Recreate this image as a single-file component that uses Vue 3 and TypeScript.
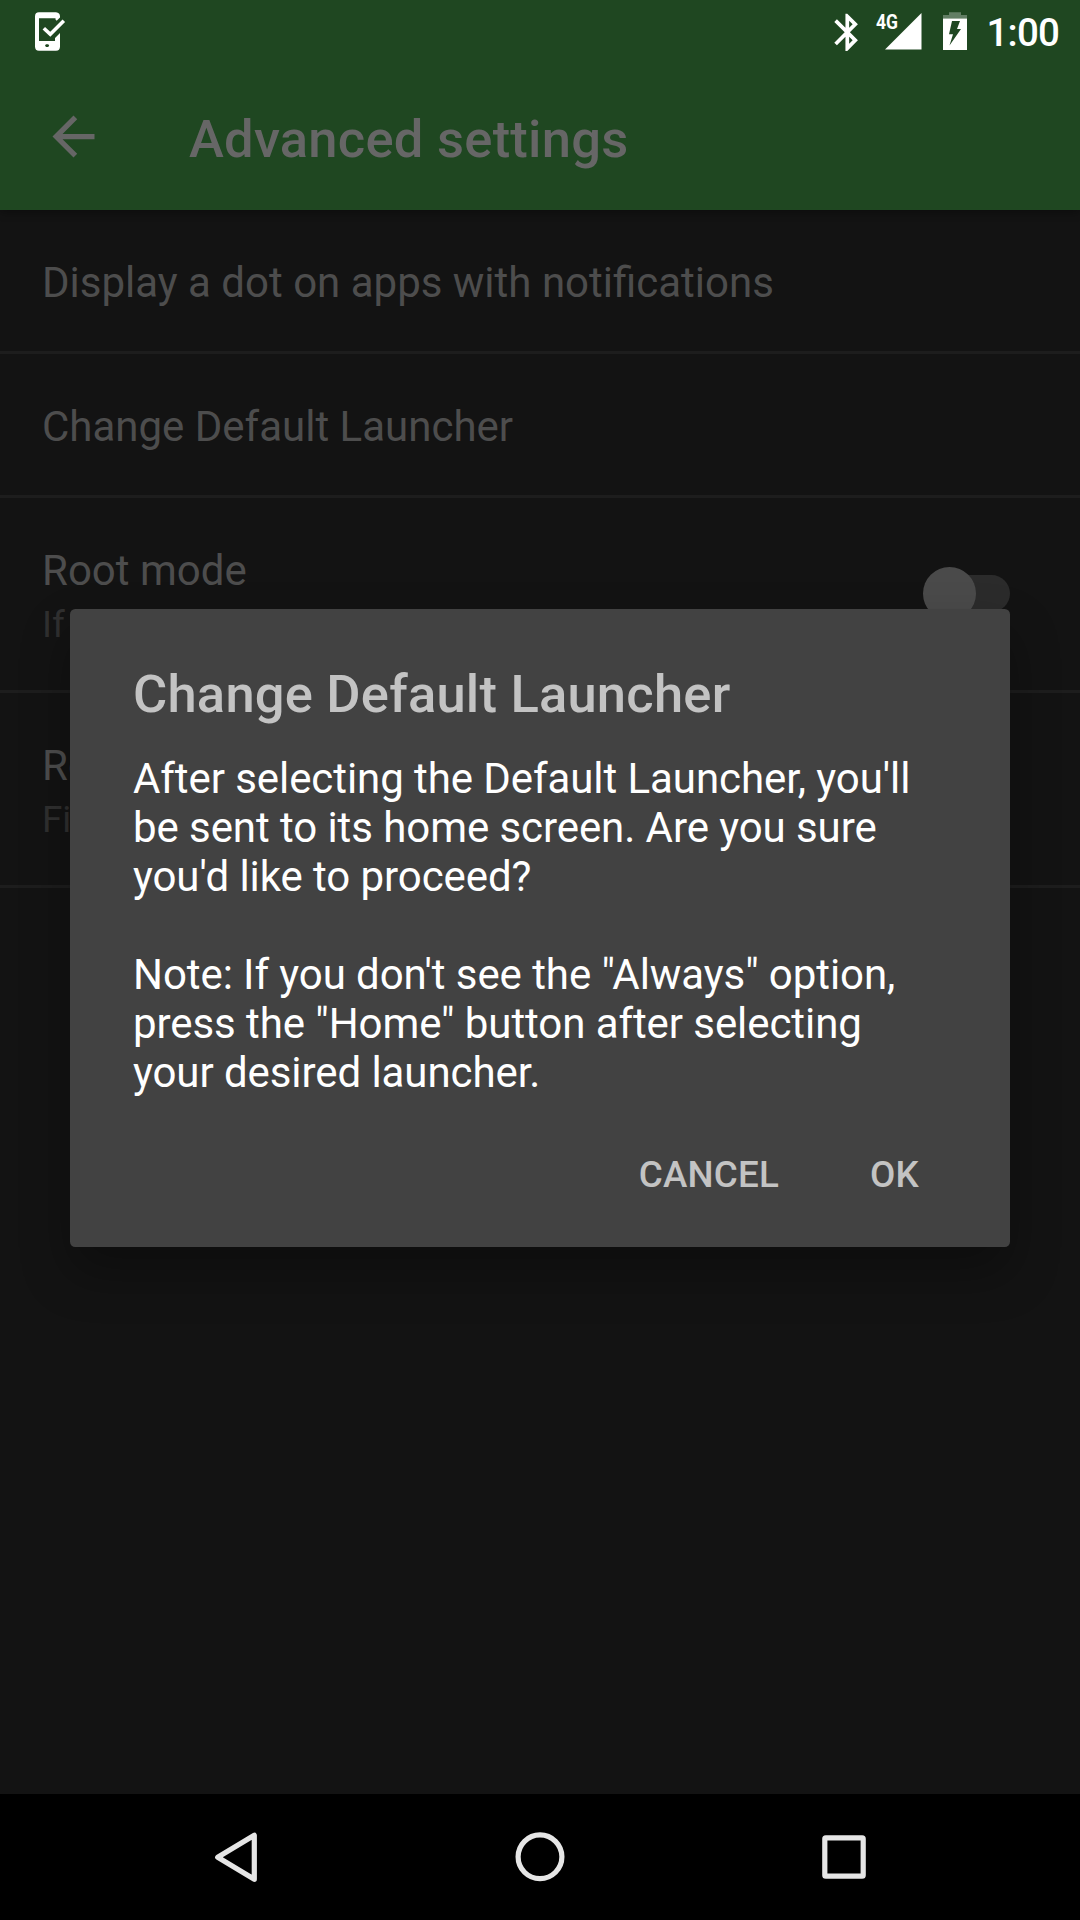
<script setup lang="ts">
interface Setting {
  title: string
  summary?: string
  toggle?: boolean
}

const settings: Setting[] = [
  { title: 'Display a dot on apps with notifications' },
  { title: 'Change Default Launcher' },
  { title: 'Root mode', summary: 'If', toggle: true },
  { title: 'Re', summary: 'Fi' },
]
</script>

<template>
  <div class="screen">
    <header class="top">
      <div class="status">
        <svg class="note" width="36" height="44" viewBox="32 10 36 44">
          <path fill="#fff" fill-rule="evenodd" d="M39 12.3H56Q60 12.6 60 16.5V17.5L56.7 20.7L55.5 19.5V18.3H39V41H55V38L60 33V46.5Q60 50.7 56 50.7H39Q35 50.7 35 46.5V16.5Q35 12.3 39 12.3ZM46 44.2L45 45.5L46 46.9H48.2L49.2 45.500L48.2 44.2Z" />
          <path d="M43.800 28.200L50.300 34.300L63.800 20.800" fill="none" stroke="#fff" stroke-width="3.600" />
        </svg>
        <span class="grow"></span>
        <svg class="bt" width="44.600" height="44.600" viewBox="0 0 24 24"><path fill="#fff" d="M17.710 7.710L12 2h-1v7.590L6.410 5 5 6.410 10.590 12 5 17.590 6.410 19 11 14.410V22h1l5.710-5.710-4.300-4.290 4.300-4.290zM13 5.830l1.880 1.880L13 9.590V5.830zm1.880 10.460L13 18.170v-3.760l1.880 1.880z" /></svg>
        <svg class="signal" width="50" height="44" viewBox="874 10 50 44">
          <path fill="#fff" d="M885 49.500L921.500 13V49.500Z" />
          <text x="876" y="29" font-size="20.600" font-weight="700" textLength="22" lengthAdjust="spacingAndGlyphs" fill="#fff">4G</text>
        </svg>
        <svg class="battery" width="24" height="44" viewBox="943 10 24 44">
          <path fill="#fff" fill-opacity=".3" d="M949 12.300H961V15H967V18.500H943V15H949Z" />
          <path fill="#fff" fill-rule="evenodd" d="M943 18.500H967V50H943ZM952 21L949 34.300H953L949.500 45.500L961 29H957L960 21Z" />
        </svg>
        <span class="time">1:00</span>
      </div>
      <div class="bar">
        <svg class="back" width="63" height="63" viewBox="0 0 24 24"><path fill="#666" d="M20 11H7.830l5.590-5.590L12 4l-8 8 8 8 1.410-1.410L7.830 13H20v-2z" /></svg>
        <h1>Advanced settings</h1>
      </div>
    </header>

    <main>
      <section v-for="item in settings" :key="item.title" class="row" :class="{ tall: item.summary }">
        <div>
          <div class="label">{{ item.title }}</div>
          <div v-if="item.summary" class="summary">{{ item.summary }}</div>
        </div>
        <div v-if="item.toggle" class="switch"><span class="thumb"></span></div>
      </section>
    </main>

    <nav>
      <svg width="1080" height="126" viewBox="0 0 1080 126" fill="none" stroke="#e6e6e6" stroke-width="5.200" stroke-linejoin="round">
        <path d="M217.700 63.300L254.300 41.300V85.300Z" />
        <circle cx="540" cy="62.800" r="21.900" />
        <rect x="824.800" y="43.800" width="38.400" height="38.400" rx="1" />
      </svg>
    </nav>

    <div class="dialog" role="dialog">
      <h2>Change Default Launcher</h2>
      <p>After selecting the Default Launcher, you'll<br>be sent to its home screen. Are you sure<br>you'd like to proceed?<br><br>Note: If you don't see the "Always" option,<br>press the "Home" button after selecting<br>your desired launcher.</p>
      <div class="actions">
        <button>CANCEL</button>
        <button>OK</button>
      </div>
    </div>
  </div>
</template>

<style>
body { margin: 0; background: #131313; }
</style>

<style scoped>
.screen {
  position: relative;
  width: 1080px;
  height: 1920px;
  display: flex;
  flex-direction: column;
  overflow: hidden;
  background: #131313;
  font-family: Roboto, sans-serif;
}
.top {
  height: 210px;
  flex: none;
  background: #1f4721;
  box-shadow: 0 3px 8px rgba(0, 0, 0, .3);
}
.status { height: 63px; display: flex; align-items: flex-start; color: #fff; }
.status svg { flex: none; margin-top: 10px; }
.status .note { margin-left: 32px; }
.grow { flex: 1; }
.status .bt { margin-right: 4.500px; }
.status .signal { margin-right: 19px; }
.status .battery { margin-right: 19.500px; }
.time { width: 93.500px; font-size: 38.500px; line-height: 46px; margin-top: 10px; font-weight: 500; letter-spacing: -.8px; }
.bar { height: 147px; display: flex; align-items: flex-start; color: #666; }
.back { margin: 42px 0 0 42px; }
h1 { margin: 45px 0 0 84px; font-size: 52.500px; line-height: 62px; font-weight: 500; letter-spacing: .25px; }
main { flex: 1; }
.row {
  height: 144px;
  box-sizing: border-box;
  border-bottom: 3px solid #1d1d1d;
  padding: 48px 70px 0 42px;
  display: flex;
  justify-content: space-between;
}
.row.tall { height: 195px; }
.label { font-size: 42px; line-height: 49px; color: #4d4d4d; }
.summary { margin-top: 8px; font-size: 36.750px; line-height: 43px; color: #303030; }
.switch { width: 76px; height: 37px; border-radius: 19px; background: #2b2b2b; margin-top: 29px; position: relative; }
.thumb { position: absolute; left: -11px; top: -8px; width: 53px; height: 53px; border-radius: 50%; background: #4a4a4a; }
nav { height: 126px; flex: none; background: #000; }
nav svg { display: block; }
.dialog {
  position: absolute;
  left: 70px;
  top: 609px;
  width: 940px;
  height: 638px;
  box-sizing: border-box;
  padding: 54px 63px 0;
  border-radius: 5.250px;
  background: #424242;
  box-shadow: 0 25px 50px rgba(0, 0, 0, .3);
}
h2 { margin: 0; font-size: 52.500px; line-height: 62px; font-weight: 500; letter-spacing: .21px; color: #c3c3c3; }
p { margin: 29px 0 0; font-size: 42px; line-height: 49px; letter-spacing: -.075px; color: #fff; white-space: nowrap; }
.actions { display: flex; justify-content: flex-end; margin-top: 56px; padding-right: 28px; gap: 91px; }
button { border: 0; padding: 0; background: none; font: 500 36.750px/43px Roboto, sans-serif; letter-spacing: .2px; color: #c3c3c3; }
</style>
